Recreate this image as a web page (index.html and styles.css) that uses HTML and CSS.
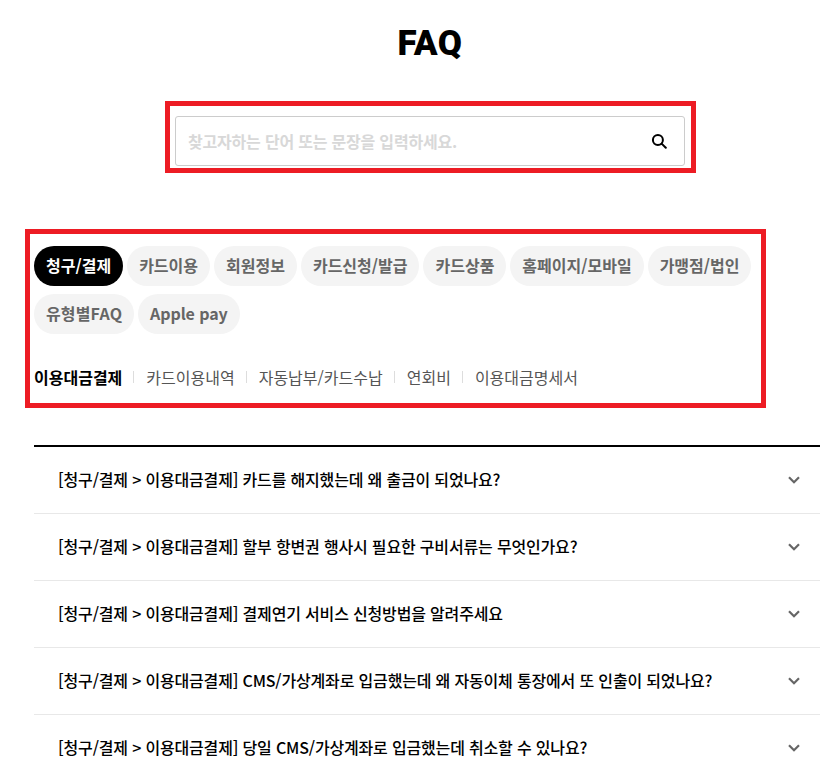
FILE: index.html
```html
<!DOCTYPE html>
<html lang="ko">
<head>
<meta charset="UTF-8" />
<meta name="viewport" content="width=device-width, initial-scale=1.0"/>
<title>FAQ</title>
<link rel="stylesheet" href="styles.css">
</head>
<body>

<section class="faq">
  <h1 class="faq__title">FAQ</h1>

  <div class="mark mark--search">
    <form class="search">
      <input class="search__input" type="text" placeholder="찾고자하는 단어 또는 문장을 입력하세요.">
      <button class="search__button" type="button" aria-label="검색">
        <svg width="16" height="16" viewBox="0 0 16 16" fill="none" stroke="#000" stroke-width="2">
          <circle cx="6.9" cy="6.9" r="5"/>
          <path d="M10.6 10.6L14.8 14.8" stroke-linecap="round"/>
        </svg>
      </button>
    </form>
  </div>

  <div class="mark mark--tabs">
    <ul class="pills">
      <li class="pill pill--on">청구/결제</li>
      <li class="pill">카드이용</li>
      <li class="pill">회원정보</li>
      <li class="pill">카드신청/발급</li>
      <li class="pill">카드상품</li>
      <li class="pill">홈페이지/모바일</li>
      <li class="pill">가맹점/법인</li>
      <li class="pill pill--faq">유형별FAQ</li>
      <li class="pill pill--apple">Apple pay</li>
    </ul>
    <ul class="subtabs">
      <li class="subtab subtab--on">이용대금결제</li>
      <li class="subtab">카드이용내역</li>
      <li class="subtab">자동납부/카드수납</li>
      <li class="subtab">연회비</li>
      <li class="subtab">이용대금명세서</li>
    </ul>
  </div>

  <ul class="list">
    <li class="list__row">
      <span>[청구/결제 &gt; 이용대금결제] 카드를 해지했는데 왜 출금이 되었나요?</span>
      <svg class="list__arrow" width="12" height="8" viewBox="0 0 12 8"><path d="M1 1.2L6 6.2L11 1.2" fill="none" stroke="#666" stroke-width="2.2"/></svg>
    </li>
    <li class="list__row">
      <span>[청구/결제 &gt; 이용대금결제] 할부 항변권 행사시 필요한 구비서류는 무엇인가요?</span>
      <svg class="list__arrow" width="12" height="8" viewBox="0 0 12 8"><path d="M1 1.2L6 6.2L11 1.2" fill="none" stroke="#666" stroke-width="2.2"/></svg>
    </li>
    <li class="list__row">
      <span>[청구/결제 &gt; 이용대금결제] 결제연기 서비스 신청방법을 알려주세요</span>
      <svg class="list__arrow" width="12" height="8" viewBox="0 0 12 8"><path d="M1 1.2L6 6.2L11 1.2" fill="none" stroke="#666" stroke-width="2.2"/></svg>
    </li>
    <li class="list__row">
      <span>[청구/결제 &gt; 이용대금결제] CMS/가상계좌로 입금했는데 왜 자동이체 통장에서 또 인출이 되었나요?</span>
      <svg class="list__arrow" width="12" height="8" viewBox="0 0 12 8"><path d="M1 1.2L6 6.2L11 1.2" fill="none" stroke="#666" stroke-width="2.2"/></svg>
    </li>
    <li class="list__row">
      <span>[청구/결제 &gt; 이용대금결제] 당일 CMS/가상계좌로 입금했는데 취소할 수 있나요?</span>
      <svg class="list__arrow" width="12" height="8" viewBox="0 0 12 8"><path d="M1 1.2L6 6.2L11 1.2" fill="none" stroke="#666" stroke-width="2.2"/></svg>
    </li>
  </ul>
</section>

</body>
</html>
```

FILE: styles.css
```css
html, body {
  overflow: hidden;
}

body {
  margin: 0;
  background: #fff;
  color: #000;
  font-family: "Noto Sans CJK KR", "Noto Sans", sans-serif;
}

ul {
  margin: 0;
  padding: 0;
  list-style: none;
}

.faq {
  height: 778px;
  padding-top: 20px;
  box-sizing: border-box;
}

.faq__title {
  margin: 0;
  height: 46px;
  padding: 1px 0 0 40px;
  box-sizing: content-box;
  font-family: Roboto, "Liberation Sans", sans-serif;
  font-size: 35px;
  font-weight: 900;
  letter-spacing: .5px;
  line-height: 46px;
  text-align: center;
}

/* Red annotation boxes */
.mark {
  border: 5px solid #ed1c24;
  box-sizing: border-box;
}

.mark--search {
  width: 531px;
  height: 72px;
  margin: 34px 0 0 165px;
  padding: 10px 5px 0 5px;
}

.mark--tabs {
  width: 741px;
  height: 179px;
  margin: 56px 0 0 25px;
  padding: 12px 4px 0 4px;
}

/* Search */
.search {
  position: relative;
  width: 510px;
  height: 50px;
}

.search__input {
  width: 100%;
  height: 100%;
  padding: 0 50px 0 12px;
  box-sizing: border-box;
  border: 1px solid #ccc;
  border-radius: 3px;
  outline: none;
  font-family: inherit;
  font-size: 16px;
  font-weight: 700;
  letter-spacing: -.2px;
}

.search__input::placeholder {
  color: #d8d8d8;
}

.search__button {
  position: absolute;
  top: 17px;
  right: 18px;
  padding: 0;
  border: none;
  background: none;
  line-height: 0;
}

/* Category pills */
.pills {
  display: flex;
  flex-wrap: wrap;
  gap: 8px 4px;
}

.pill {
  height: 40px;
  padding: 0 12px;
  border-radius: 20px;
  background: #f4f4f4;
  color: #666;
  font-size: 16px;
  font-weight: 700;
  line-height: 38px;
}

.pill--on {
  background: #000;
  color: #fff;
}

.pill--faq {
  letter-spacing: .15px;
}

.pill--apple {
  letter-spacing: -.1px;
}

/* Sub tabs */
.subtabs {
  display: flex;
  margin-top: 28px;
}

.subtab {
  display: flex;
  align-items: center;
  height: 30px;
  color: #555;
  font-size: 16px;
}

.subtab + .subtab::before {
  content: "";
  width: 1px;
  height: 12px;
  margin: 0 12px 0 11px;
  background: #ddd;
}

.subtab--on {
  color: #000;
  font-weight: 700;
}

/* Question list */
.list {
  margin: 37px 0 0 34px;
  border-top: 2px solid #000;
}

.list__row {
  display: flex;
  justify-content: space-between;
  align-items: center;
  height: 67px;
  padding: 0 20px 0 24px;
  box-sizing: border-box;
  border-bottom: 1px solid #e8e8e8;
  font-size: 16px;
  font-weight: 500;
  letter-spacing: -.17px;
}

.list__row span {
  margin-top: -2px;
}

.list__arrow {
  flex: none;
}
```
